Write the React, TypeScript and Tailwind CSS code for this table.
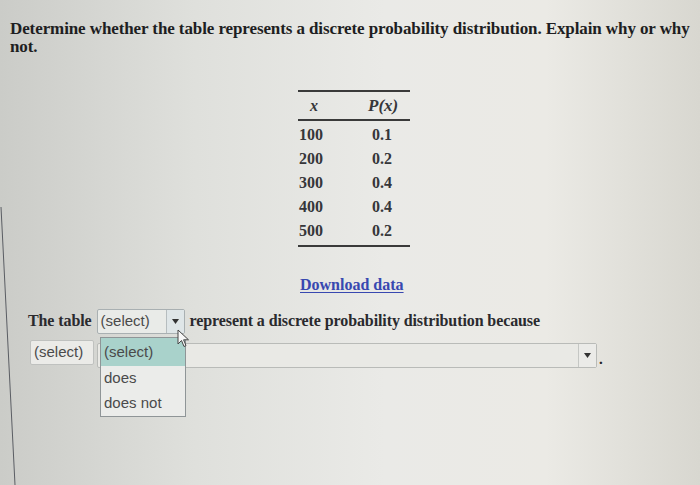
import React from "react";

const serif = { fontFamily: '"Liberation Serif", "Times New Roman", serif' };
const sans = { fontFamily: '"Liberation Sans", Arial, sans-serif' };

function Arrow() {
  return (
    <svg width="7" height="5" viewBox="0 0 7 5">
      <path d="M0 0 L7 0 L3.5 5 Z" fill="#333" />
    </svg>
  );
}

export default function App() {
  const rows: [string, string][] = [
    ["100", "0.1"],
    ["200", "0.2"],
    ["300", "0.4"],
    ["400", "0.4"],
    ["500", "0.2"],
  ];
  return (
    <div
      className="relative w-[700px] h-[485px] overflow-hidden bg-[linear-gradient(90deg,#cbccc8_0%,#dfe0dc_28%,#eaeae7_55%,#ebeae5_78%,#d8d7d0_100%)] text-[#222]"
      style={serif}
    >
      <p className="w-[700px] pl-[10px] pt-[20px] text-[17px] leading-[18px] font-bold tracking-[-0.1px] text-[#1e1e22]">
        Determine whether the table represents a discrete probability distribution. Explain why or why not.
      </p>

      <div className="ml-[298px] mt-[34px] w-[112px] border-t-2 border-b-2 border-[#3a3a3a] pb-[2px] text-[16px] font-bold text-[#36363a]">
        <div className="flex h-[29px] items-center border-b-2 border-[#3a3a3a]">
          <span className="w-[30px] pl-[12px] italic">x</span>
          <span className="flex-1 pl-[40px] text-[17px] italic">P(x)</span>
        </div>
        <div className="pt-[2px]">
          {rows.map(([x, p]) => (
            <div key={x} className="flex h-[24px] items-center">
              <span className="w-[60px] pl-[1px]">{x}</span>
              <span className="flex-1 pl-[14px]">{p}</span>
            </div>
          ))}
        </div>
      </div>

      <div className="ml-[300px] mt-[29px] text-[16px] leading-[18px] font-bold text-[#3848b0] underline underline-offset-2">
        Download data
      </div>

      <div className="ml-[28px] mt-[15px] flex h-[24px] items-center text-[16px] font-bold tracking-[-0.1px] text-[#2a2a2e]">
        <span>The table</span>
        <div className="ml-[5px] flex h-[25px] w-[88px] items-stretch rounded-[2px] border border-[#a9b0b2] bg-[#e9ebe8] font-normal tracking-normal">
          <span className="flex flex-1 items-center pl-[3px] text-[15px] text-[#4a4a4a]" style={sans}>
            (select)
          </span>
          <span className="flex w-[18px] items-center justify-center border-l border-[#b6bdbf] bg-[#dfe6e8]">
            <Arrow />
          </span>
        </div>
        <span className="ml-[5px]">represent a discrete probability distribution because</span>
      </div>

      <div className="ml-[30px] mt-[7px] flex items-start">
        <div className="flex h-[25px] w-[64px] items-center rounded-[2px] border border-[#bfc1bf] bg-[#ebebe8] pl-[3px] text-[15px] text-[#4a4a4a]" style={sans}>
          (select)
        </div>
        <div className="ml-[3px] mt-[3px] flex h-[25px] w-[500px] items-stretch rounded-[2px] border border-[#b9bbb8] bg-[#e9e9e5]">
          <span className="flex-1" />
          <span className="flex w-[18px] items-center justify-center border-l border-[#c5c7c4] bg-[#ebebe8]">
            <Arrow />
          </span>
        </div>
        <span className="ml-[2px] mt-[12px] text-[15px] font-bold leading-[15px]">.</span>
      </div>

      <div
        className="absolute left-[100px] top-[337px] w-[86px] border border-[#8f9597] bg-[#ebecea] text-[15px] text-[#4a4a4a]"
        style={sans}
      >
        <div className="flex h-[28px] items-center bg-[#a9d2cb] pl-[3px]">(select)</div>
        <div className="flex h-[25px] items-center pl-[3px]">does</div>
        <div className="flex h-[25px] items-center pl-[3px]">does not</div>
      </div>

      <svg className="absolute left-[177px] top-[329px]" width="14" height="20" viewBox="0 0 14 20">
        <path
          d="M1 1 L1 15 L4.5 11.5 L7 17.5 L9 16.6 L6.6 10.8 L11.5 10.8 Z"
          fill="#f7f7f7"
          stroke="#444"
          strokeWidth="1"
          strokeLinejoin="round"
        />
      </svg>

      <svg className="absolute left-0 top-0" width="700" height="485" viewBox="0 0 700 485" pointerEvents="none">
        <line x1="1" y1="207" x2="15" y2="485" stroke="#5a5d63" strokeWidth="1" />
      </svg>
    </div>
  );
}
